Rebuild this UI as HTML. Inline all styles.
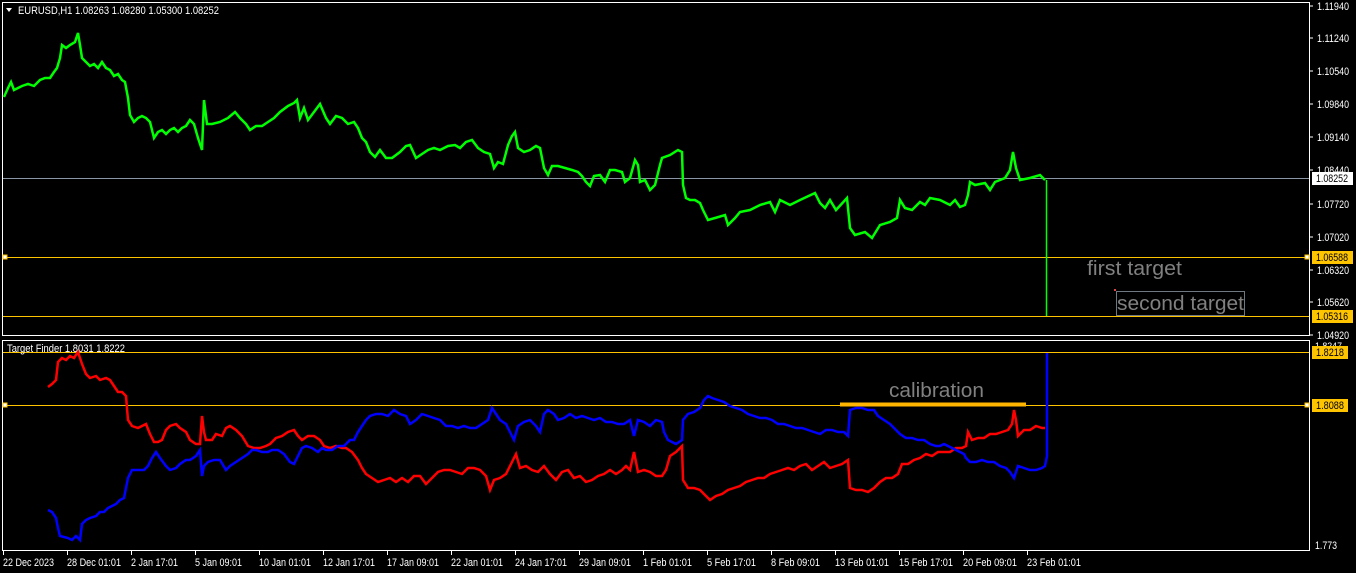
<!DOCTYPE html>
<html><head><meta charset="utf-8"><style>
html,body{margin:0;padding:0;background:#000;width:1356px;height:573px;overflow:hidden}
svg{display:block}
text{font-family:"Liberation Sans",sans-serif}
</style></head><body>
<svg width="1356" height="573" viewBox="0 0 1356 573" xmlns="http://www.w3.org/2000/svg">
<rect width="1356" height="573" fill="#000"/>
<rect x="2.5" y="2.5" width="1307" height="333" fill="none" stroke="#fff" stroke-width="1"/>
<rect x="2.5" y="340.5" width="1307" height="210" fill="none" stroke="#fff" stroke-width="1"/>
<g stroke="#fff" stroke-width="1">
<line x1="1310" y1="6" x2="1313" y2="6"/><line x1="1310" y1="38" x2="1313" y2="38"/><line x1="1310" y1="71" x2="1313" y2="71"/><line x1="1310" y1="104" x2="1313" y2="104"/><line x1="1310" y1="137" x2="1313" y2="137"/><line x1="1310" y1="170" x2="1313" y2="170"/><line x1="1310" y1="204" x2="1313" y2="204"/><line x1="1310" y1="237" x2="1313" y2="237"/><line x1="1310" y1="270" x2="1313" y2="270"/><line x1="1310" y1="302" x2="1313" y2="302"/><line x1="1310" y1="335" x2="1313" y2="335"/>
</g>
<g font-size="11" fill="#fff" lengthAdjust="spacingAndGlyphs">
<text x="1317" y="10" textLength="32" lengthAdjust="spacingAndGlyphs">1.11940</text><text x="1317" y="42" textLength="32" lengthAdjust="spacingAndGlyphs">1.11240</text><text x="1317" y="75" textLength="32" lengthAdjust="spacingAndGlyphs">1.10540</text><text x="1317" y="108" textLength="32" lengthAdjust="spacingAndGlyphs">1.09840</text><text x="1317" y="141" textLength="32" lengthAdjust="spacingAndGlyphs">1.09140</text><text x="1317" y="174" textLength="32" lengthAdjust="spacingAndGlyphs">1.08440</text><text x="1317" y="208" textLength="32" lengthAdjust="spacingAndGlyphs">1.07720</text><text x="1317" y="241" textLength="32" lengthAdjust="spacingAndGlyphs">1.07020</text><text x="1317" y="274" textLength="32" lengthAdjust="spacingAndGlyphs">1.06320</text><text x="1317" y="306" textLength="32" lengthAdjust="spacingAndGlyphs">1.05620</text><text x="1317" y="339" textLength="32" lengthAdjust="spacingAndGlyphs">1.04920</text>
<text x="1315" y="349" font-size="9" textLength="27" lengthAdjust="spacingAndGlyphs">1.8247</text>
<text x="1315" y="549" textLength="22" lengthAdjust="spacingAndGlyphs">1.773</text>
</g>
<line x1="3" y1="178.5" x2="1309" y2="178.5" stroke="#8a96a6" stroke-width="1"/>
<line x1="3" y1="257.5" x2="1309" y2="257.5" stroke="#ffc400" stroke-width="1"/>
<line x1="3" y1="316.5" x2="1309" y2="316.5" stroke="#ffc400" stroke-width="1"/>
<line x1="3" y1="352.5" x2="1309" y2="352.5" stroke="#ffc400" stroke-width="1"/>
<line x1="3" y1="405.5" x2="1309" y2="405.5" stroke="#ffc400" stroke-width="1"/>
<rect x="3" y="255" width="4" height="4" fill="#fff" stroke="#ffc400"/>
<rect x="1305" y="255" width="4" height="4" fill="#fff" stroke="#ffc400"/>
<rect x="3" y="403" width="4" height="4" fill="#fff" stroke="#ffc400"/>
<rect x="1305" y="403" width="4" height="4" fill="#fff" stroke="#ffc400"/>
<rect x="1312" y="172" width="41" height="13" fill="#fff"/><text x="1316" y="182" font-size="11" fill="#000" textLength="32" lengthAdjust="spacingAndGlyphs">1.08252</text>
<rect x="1312" y="251" width="41" height="13" fill="#ffc400"/><text x="1316" y="261" font-size="11" fill="#000" textLength="32" lengthAdjust="spacingAndGlyphs">1.06588</text>
<rect x="1312" y="310" width="41" height="13" fill="#ffc400"/><text x="1316" y="320" font-size="11" fill="#000" textLength="32" lengthAdjust="spacingAndGlyphs">1.05316</text>
<rect x="1312" y="346" width="36" height="13" fill="#ffc400"/><text x="1316" y="356" font-size="11" fill="#000" textLength="28" lengthAdjust="spacingAndGlyphs">1.8218</text>
<rect x="1312" y="399" width="36" height="13" fill="#ffc400"/><text x="1316" y="409" font-size="11" fill="#000" textLength="28" lengthAdjust="spacingAndGlyphs">1.8088</text>
<polygon points="6,8 12,8 9,12" fill="#fff"/>
<text x="18" y="14" font-size="11" fill="#fff" textLength="201" lengthAdjust="spacingAndGlyphs">EURUSD,H1  1.08263 1.08280 1.05300 1.08252</text>
<text x="7" y="352" font-size="11" fill="#fff" textLength="118" lengthAdjust="spacingAndGlyphs">Target Finder 1.8031 1.8222</text>
<polyline fill="none" stroke="#00ff00" stroke-width="2.5" points="4,97 8,88 11,82 14,90 18,88 22,86 28,84 34,86 40,80 45,78 50,78 54,72 57,68 60,58 62,45 66,48 70,45 75,42 78,33 80,45 82,58 86,62 90,66 94,64 98,68 102,62 106,68 110,70 114,76 118,74 122,80 125,82 128,98 130,115 134,122 138,118 142,116 146,118 150,122 154,138 158,132 162,130 166,134 170,130 174,128 178,132 182,128 186,126 190,120 194,124 198,138 202,150 204,100 207,124 212,124 220,122 228,118 235,112 240,118 246,124 250,130 256,126 262,126 268,122 274,118 280,112 288,106 294,103 297,100 300,118 304,108 308,120 314,112 320,104 326,118 330,124 336,116 342,118 348,124 354,122 358,128 362,138 366,142 370,152 375,157 380,150 386,158 392,158 400,152 406,146 410,145 416,158 422,154 428,150 434,148 440,150 448,146 455,145 460,148 466,142 472,140 478,148 484,152 490,154 494,168 498,162 503,164 508,145 512,136 515,132 518,148 524,152 530,150 536,146 540,148 544,168 548,175 552,166 558,166 565,168 572,170 578,172 582,176 586,182 590,186 594,176 600,175 605,182 610,170 615,170 622,172 625,182 630,178 635,160 638,165 640,182 645,180 650,190 655,185 660,165 662,158 670,155 678,150 682,152 683,185 686,198 690,200 695,200 700,203 703,210 708,220 715,218 725,215 728,225 735,218 740,212 750,210 760,205 770,202 775,212 780,200 790,205 800,200 815,193 820,203 825,208 830,200 836,210 847,198 850,228 855,235 865,232 872,238 880,225 890,222 897,218 900,200 905,208 912,210 920,202 925,205 930,198 940,200 950,205 955,200 960,207 965,205 968,195 970,182 975,185 985,183 990,190 995,182 1005,178 1010,170 1013,152 1016,168 1020,180 1030,178 1040,175 1045,180"/>
<line x1="1046.5" y1="180" x2="1046.5" y2="316" stroke="#00ff00" stroke-width="1.5"/>
<text x="1087" y="275" font-size="20" fill="#808080" textLength="95" lengthAdjust="spacingAndGlyphs">first target</text>
<rect x="1116.5" y="291.5" width="128" height="24" fill="none" stroke="#6f7780" stroke-width="1"/>
<rect x="1114" y="289" width="2" height="2" fill="#d44"/>
<text x="1117" y="310" font-size="20" fill="#808080" textLength="127" lengthAdjust="spacingAndGlyphs">second target</text>
<text x="889" y="397" font-size="20" fill="#808080" textLength="95" lengthAdjust="spacingAndGlyphs">calibration</text>
<line x1="840" y1="404.5" x2="1026" y2="404.5" stroke="#ffb400" stroke-width="4"/>
<polyline fill="none" stroke="#ff0000" stroke-width="2.5" points="48,387 52,384 56,380 58,362 62,358 66,360 70,356 74,358 78,352 82,364 86,374 90,378 96,376 100,380 106,378 110,380 114,386 118,392 122,392 126,396 128,420 132,426 138,428 142,426 146,424 150,434 154,442 158,442 162,440 166,430 170,426 176,424 180,428 186,432 190,440 196,444 200,444 202,416 204,432 206,440 212,440 216,434 222,436 226,428 230,426 236,430 242,436 248,446 254,448 260,448 266,446 270,444 276,438 282,436 288,432 294,430 298,436 302,440 308,436 314,436 320,440 324,446 330,448 336,446 342,448 346,448 352,452 358,460 362,468 366,474 372,478 378,482 384,480 390,478 396,482 402,478 408,482 414,476 420,476 426,484 432,478 438,472 444,470 450,470 456,472 462,474 468,468 474,468 480,470 486,476 490,490 494,480 500,478 506,474 512,462 516,454 520,468 526,466 532,470 538,472 544,466 550,474 556,480 562,472 568,470 574,478 580,476 586,482 592,480 598,476 604,474 610,470 616,474 622,470 626,466 630,470 634,452 638,472 644,470 650,472 656,476 662,476 666,470 670,456 676,452 682,446 683,480 688,488 694,488 700,490 706,496 710,500 716,496 722,494 728,490 734,488 740,486 746,482 752,480 758,478 764,478 770,474 776,472 782,470 788,468 794,470 800,466 806,464 812,470 818,466 824,462 830,468 836,466 842,464 848,460 850,488 856,490 862,490 868,492 874,488 880,482 886,478 892,478 898,474 902,464 908,464 914,460 920,458 926,454 932,456 938,452 944,452 950,452 956,448 962,448 966,446 968,432 972,440 978,438 984,438 990,434 996,434 1002,432 1008,430 1012,424 1014,410 1016,420 1018,436 1024,430 1030,430 1036,426 1042,428 1045,428"/>
<polyline fill="none" stroke="#0000ff" stroke-width="2.5" points="48,510 52,512 56,518 58,528 60,536 64,537 68,538 72,540 76,536 80,540 82,524 86,520 90,518 96,516 100,512 104,512 108,508 112,506 116,504 120,500 124,498 128,478 132,470 138,470 144,470 148,466 152,458 156,452 160,458 166,466 170,470 176,468 180,464 186,460 190,460 196,456 200,450 202,476 204,466 208,462 214,460 220,460 226,470 230,466 236,462 242,458 248,454 252,450 256,450 262,452 268,452 272,450 278,450 284,454 290,462 294,464 298,456 302,448 306,446 312,448 318,452 322,448 326,450 332,450 338,446 344,446 350,440 354,440 358,432 362,426 366,420 370,416 376,414 382,414 388,416 394,410 400,414 406,416 410,424 416,420 422,414 428,416 434,418 440,420 446,426 452,426 458,428 464,426 470,428 476,428 482,424 488,420 492,408 496,414 500,420 506,424 510,432 514,440 518,426 524,422 530,420 536,426 540,432 544,414 548,410 554,414 558,420 564,418 570,414 576,418 582,416 588,418 594,420 600,418 606,422 612,422 618,424 624,424 630,420 634,436 638,420 644,422 650,426 656,420 662,422 664,432 668,440 676,444 682,440 683,420 688,414 694,412 700,408 704,400 708,396 712,398 718,400 724,402 730,406 736,408 742,410 748,414 754,416 760,418 766,418 772,420 778,424 784,424 790,426 796,428 802,428 808,430 814,432 820,434 826,430 832,430 838,432 844,432 848,436 850,410 856,408 862,408 868,410 874,410 878,416 884,420 890,424 894,428 900,434 906,438 912,438 918,440 924,440 930,444 936,446 940,446 944,444 948,446 952,448 956,450 960,452 964,454 966,458 970,462 976,462 982,460 988,462 994,462 1000,466 1006,468 1010,472 1014,478 1018,466 1024,468 1030,470 1036,470 1042,468 1045,466 1047,456 1047,353"/>
<g stroke="#fff" stroke-width="1">
<line x1="3.5" y1="551" x2="3.5" y2="555"/><line x1="67.5" y1="551" x2="67.5" y2="555"/><line x1="131.5" y1="551" x2="131.5" y2="555"/><line x1="195.5" y1="551" x2="195.5" y2="555"/><line x1="259.5" y1="551" x2="259.5" y2="555"/><line x1="323.5" y1="551" x2="323.5" y2="555"/><line x1="387.5" y1="551" x2="387.5" y2="555"/><line x1="451.5" y1="551" x2="451.5" y2="555"/><line x1="515.5" y1="551" x2="515.5" y2="555"/><line x1="579.5" y1="551" x2="579.5" y2="555"/><line x1="643.5" y1="551" x2="643.5" y2="555"/><line x1="707.5" y1="551" x2="707.5" y2="555"/><line x1="771.5" y1="551" x2="771.5" y2="555"/><line x1="835.5" y1="551" x2="835.5" y2="555"/><line x1="899.5" y1="551" x2="899.5" y2="555"/><line x1="963.5" y1="551" x2="963.5" y2="555"/><line x1="1027.5" y1="551" x2="1027.5" y2="555"/>
</g>
<g font-size="11" fill="#fff">
<text x="3" y="566" textLength="51" lengthAdjust="spacingAndGlyphs">22 Dec 2023</text>
<text x="67" y="566" textLength="54" lengthAdjust="spacingAndGlyphs">28 Dec 01:01</text>
<text x="131" y="566" textLength="47" lengthAdjust="spacingAndGlyphs">2 Jan 17:01</text>
<text x="195" y="566" textLength="47" lengthAdjust="spacingAndGlyphs">5 Jan 09:01</text>
<text x="259" y="566" textLength="52" lengthAdjust="spacingAndGlyphs">10 Jan 01:01</text>
<text x="323" y="566" textLength="52" lengthAdjust="spacingAndGlyphs">12 Jan 17:01</text>
<text x="387" y="566" textLength="52" lengthAdjust="spacingAndGlyphs">17 Jan 09:01</text>
<text x="451" y="566" textLength="52" lengthAdjust="spacingAndGlyphs">22 Jan 01:01</text>
<text x="515" y="566" textLength="52" lengthAdjust="spacingAndGlyphs">24 Jan 17:01</text>
<text x="579" y="566" textLength="52" lengthAdjust="spacingAndGlyphs">29 Jan 09:01</text>
<text x="643" y="566" textLength="49" lengthAdjust="spacingAndGlyphs">1 Feb 01:01</text>
<text x="707" y="566" textLength="49" lengthAdjust="spacingAndGlyphs">5 Feb 17:01</text>
<text x="771" y="566" textLength="49" lengthAdjust="spacingAndGlyphs">8 Feb 09:01</text>
<text x="835" y="566" textLength="54" lengthAdjust="spacingAndGlyphs">13 Feb 01:01</text>
<text x="899" y="566" textLength="54" lengthAdjust="spacingAndGlyphs">15 Feb 17:01</text>
<text x="963" y="566" textLength="54" lengthAdjust="spacingAndGlyphs">20 Feb 09:01</text>
<text x="1027" y="566" textLength="54" lengthAdjust="spacingAndGlyphs">23 Feb 01:01</text>
</g>
</svg>
</body></html>
